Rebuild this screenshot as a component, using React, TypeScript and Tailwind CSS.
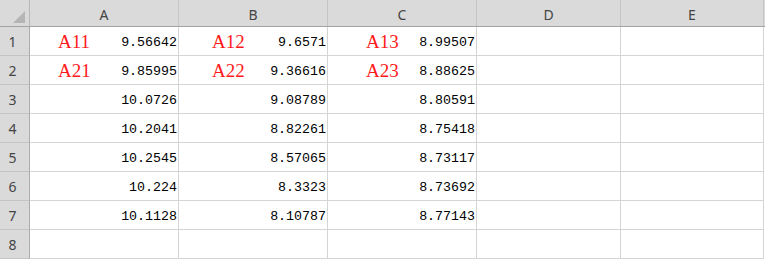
import React from "react";

const cols = ["A", "B", "C", "D", "E"];
const colW = ["w-[149px]", "w-[149px]", "w-[149px]", "w-[144px]", "w-[143px]"];
const labelMl = ["ml-[28px]", "ml-[33px]", "ml-[38px]"];

type Cell = { label?: string; value?: string };
const rows: Cell[][] = [
  [{ label: "A11", value: "9.56642" }, { label: "A12", value: "9.6571" }, { label: "A13", value: "8.99507" }],
  [{ label: "A21", value: "9.85995" }, { label: "A22", value: "9.36616" }, { label: "A23", value: "8.88625" }],
  [{ value: "10.0726" }, { value: "9.08789" }, { value: "8.80591" }],
  [{ value: "10.2041" }, { value: "8.82261" }, { value: "8.75418" }],
  [{ value: "10.2545" }, { value: "8.57065" }, { value: "8.73117" }],
  [{ value: "10.224" }, { value: "8.3323" }, { value: "8.73692" }],
  [{ value: "10.1128" }, { value: "8.10787" }, { value: "8.77143" }],
  [{}, {}, {}],
];

export default function App() {
  return (
    <div className="w-[765px] h-[259px] overflow-hidden bg-white">
      {/* header */}
      <div className="flex h-[27px] bg-[#dadada] border-b border-[#a3a3a3]">
        <div className="w-[30px] shrink-0 border-r border-[#b8b8b8] flex items-end justify-end pr-[4px] pb-[3px]">
          <svg width="12" height="12" viewBox="0 0 12 12">
            <polygon points="12,0 12,12 0,12" fill="#b5b5b5" />
          </svg>
        </div>
        {cols.map((c, i) => (
          <div
            key={c}
            className={`${colW[i]} shrink-0 border-r border-[#c4c4c4] flex items-center justify-center pt-[3px] text-[14px] text-[#444444]`}
            style={{ fontFamily: '"Noto Sans", "Liberation Sans", sans-serif' }}
          >
            {c}
          </div>
        ))}
      </div>
      {rows.map((r, ri) => (
        <div key={ri} className="flex h-[29px]">
          <div
            className="w-[30px] shrink-0 bg-[#dadada] border-r border-[#ababab] border-b border-b-[#c4c4c4] flex items-center justify-center pr-[4px] pt-[1px] text-[14px] text-[#444444]"
            style={{ fontFamily: '"Noto Sans", "Liberation Sans", sans-serif' }}
          >
            {ri + 1}
          </div>
          {cols.map((c, ci) => {
            const cell = r[ci];
            return (
              <div
                key={c}
                className={`${colW[ci]} shrink-0 border-r border-b border-[#d4d4d4] flex items-center justify-between`}
              >
                {cell?.label ? (
                  <span
                    className={`${labelMl[ci]} text-[19px] leading-none text-[#ff1a1a]`}
                    style={{ fontFamily: '"Liberation Serif", serif' }}
                  >
                    {cell.label}
                  </span>
                ) : (
                  <span />
                )}
                {cell?.value ? (
                  <span
                    className="pr-[1px] pt-[3px] text-[13.3px] leading-none text-black"
                    style={{ fontFamily: '"Liberation Mono", monospace' }}
                  >
                    {cell.value}
                  </span>
                ) : null}
              </div>
            );
          })}
        </div>
      ))}
    </div>
  );
}
